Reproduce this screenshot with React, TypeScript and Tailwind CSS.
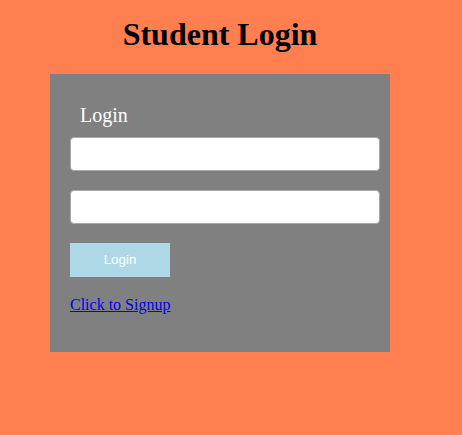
export default function App() {
  return (
    <div className="w-[462px] h-[435px] bg-[#FF7F50] overflow-hidden" style={{ fontFamily: '"Liberation Serif", serif' }}>
      <div className="w-[440px] pt-[16px] text-center text-[32px] font-bold leading-[37px] text-black">Student Login</div>
      <div className="ml-[50px] mt-[21px] w-[340px] h-[278px] bg-[#808080] pl-[20px] pt-[30px] flex flex-col items-start">
        <div className="pl-[10px] text-[20px] leading-[23px] text-white">Login</div>
        <input className="mt-[10px] w-[310px] h-[34px] bg-white border border-[#a9a9a9] rounded-[4px] outline-none" />
        <input type="password" className="mt-[19px] w-[310px] h-[34px] bg-white border border-[#a9a9a9] rounded-[4px] outline-none" />
        <button className="mt-[19px] w-[100px] h-[34px] bg-[#ADD8E6] text-white text-[13.33px] flex items-center justify-center" style={{ fontFamily: '"Liberation Sans", Arial, sans-serif' }}>Login</button>
        <a href="#" className="mt-[19px] text-[16px] leading-[18px] text-[#0000EE] underline">Click to Signup</a>
      </div>
    </div>
  );
}
